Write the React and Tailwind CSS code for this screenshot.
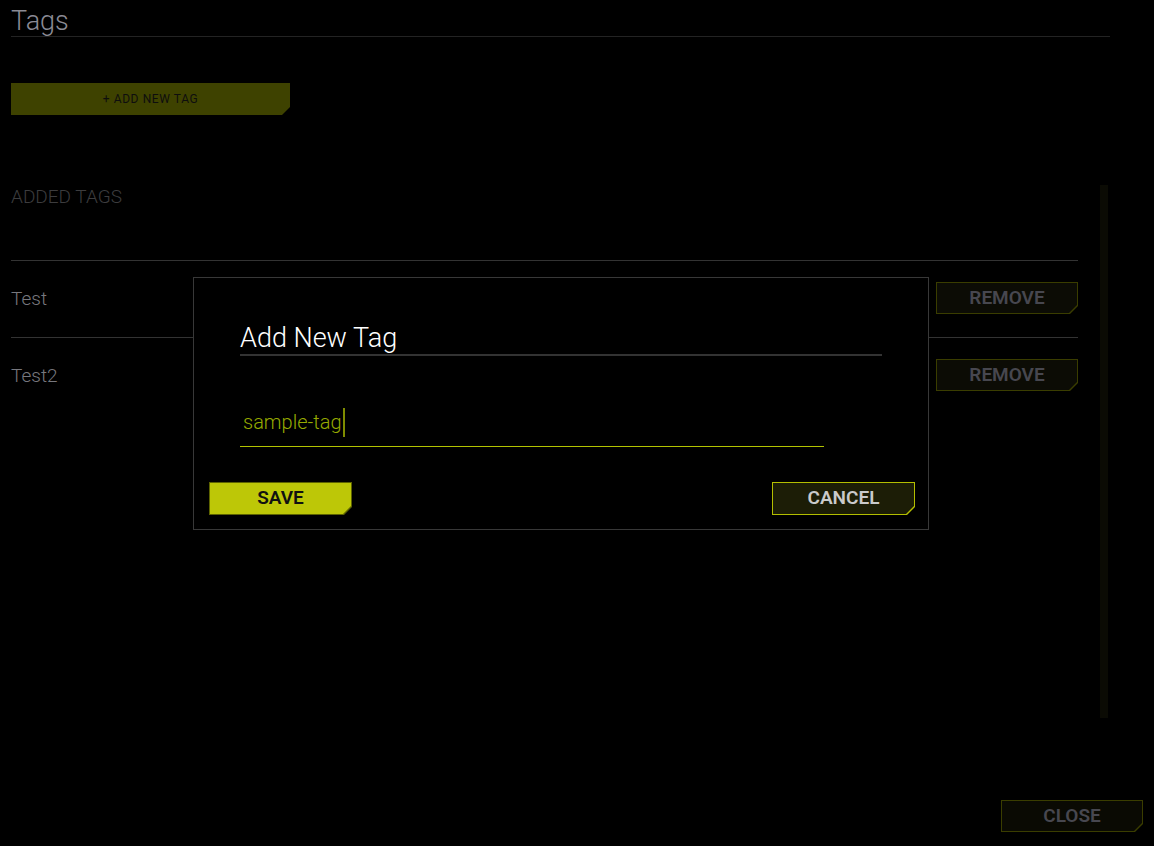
const clip = { clipPath: "polygon(0 0, 100% 0, 100% calc(100% - 8px), calc(100% - 8px) 100%, 0 100%)" };

const CutButton = ({ label, border, fill, text, className = "", textClass = "" }) => (
    <div className={`p-px ${border} ${className}`} style={clip}>
        <div className={`w-full h-full flex items-center justify-center ${fill}`} style={clip}>
            <span className={`uppercase ${text} ${textClass}`}>{label}</span>
        </div>
    </div>
);

const tags = ["Test", "Test2"];

export default function App() {
    return (
        <div className="relative w-[1154px] h-[846px] bg-black overflow-hidden" style={{ fontFamily: "Roboto, 'Liberation Sans', sans-serif" }}>
            <div className="px-[11px]">
                <div className="w-[1099px] border-b border-[#232323] pt-[6px]">
                    <h1 className="text-[27px] leading-[30px] font-light text-[#8b8b95]">Tags</h1>
                </div>

                <CutButton
                    label="+ Add New Tag"
                    border="bg-[#3e4200]"
                    fill="bg-[#3e4200]"
                    text="text-[#0e0e0e]"
                    textClass="text-[12px] tracking-[0.6px]"
                    className="mt-[46px] w-[279px] h-[32px]"
                />

                <div className="flex mt-[69px]">
                    <div className="w-[1067px] pt-[1px]">
                        <div className="text-[19px] leading-[24px] font-light text-[#3c3c3e] h-[75px]">ADDED TAGS</div>
                        {tags.map((t) => (
                            <div key={t} className="h-[77px] border-t border-[#333] flex items-center justify-between">
                                <span className="text-[19px] font-light text-[#77777d]">{t}</span>
                                <CutButton
                                    label="Remove"
                                    border="bg-[#3a3d00]"
                                    fill="bg-[#0c0c05]"
                                    text="text-[#47474f]"
                                    textClass="text-[19px] font-semibold"
                                    className="w-[142px] h-[32px] mb-[2px]"
                                />
                            </div>
                        ))}
                    </div>
                    <div className="ml-[22px] mt-[1px] w-[8px] h-[533px] bg-[#0b0b04]" />
                </div>
            </div>

            <div className="absolute right-[11px] bottom-[14px]">
                <CutButton
                    label="Close"
                    border="bg-[#3a3d00]"
                    fill="bg-[#0a0a03]"
                    text="text-[#47474f]"
                    textClass="text-[19px] font-semibold"
                    className="w-[142px] h-[32px]"
                />
            </div>

            {/* modal */}
            <div className="absolute left-[193px] top-[277px] w-[736px] h-[253px] border border-[#383838] bg-black">
                <div className="pl-[46px] pr-[46px] pt-[45px]">
                    <div className="border-b-2 border-[#333]">
                        <h2 className="text-[27px] leading-[31px] font-light text-white">Add New Tag</h2>
                    </div>
                    <div className="w-[584px] mt-[54px] border-b border-[#b2c200] flex items-start h-[37px] pl-[3px]">
                        <span className="text-[20px] leading-[24px] font-light text-[#96aa00]">sample-tag</span>
                        <span className="w-[2px] h-[29px] bg-[#7f8c00] ml-px -mt-[2px]" />
                    </div>
                </div>
                <div className="flex justify-between pl-[15px] pr-[13px] mt-[35px]">
                    <CutButton
                        label="Save"
                        border="bg-[#5d6300]"
                        fill="bg-[#bdc707]"
                        text="text-[#111]"
                        textClass="text-[19px] font-semibold"
                        className="w-[143px] h-[33px]"
                    />
                    <CutButton
                        label="Cancel"
                        border="bg-[#b3be00]"
                        fill="bg-[#1c1d06]"
                        text="text-[#cacaca]"
                        textClass="text-[19px] font-semibold"
                        className="w-[143px] h-[33px]"
                    />
                </div>
            </div>
        </div>
    );
}
